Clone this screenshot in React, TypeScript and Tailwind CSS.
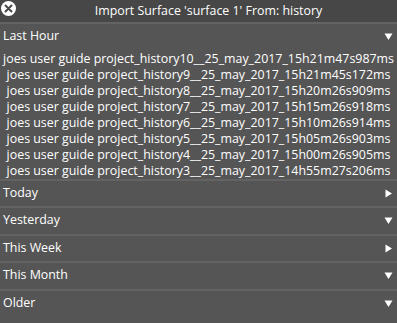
import React from 'react';

type Section = { label: string; open: boolean };

const files = [
  'joes user guide project_history10__25_may_2017_15h21m47s987ms',
  'joes user guide project_history9__25_may_2017_15h21m45s172ms',
  'joes user guide project_history8__25_may_2017_15h20m26s909ms',
  'joes user guide project_history7__25_may_2017_15h15m26s918ms',
  'joes user guide project_history6__25_may_2017_15h10m26s914ms',
  'joes user guide project_history5__25_may_2017_15h05m26s903ms',
  'joes user guide project_history4__25_may_2017_15h00m26s905ms',
  'joes user guide project_history3__25_may_2017_14h55m27s206ms',
];

const sections: Section[] = [
  { label: 'Today', open: false },
  { label: 'Yesterday', open: true },
  { label: 'This Week', open: false },
  { label: 'This Month', open: true },
  { label: 'Older', open: true },
];

const Arrow: React.FC<{ open: boolean }> = ({ open }) => (
  <svg width="9" height="9" viewBox="0 0 9 9" className="shrink-0">
    {open ? <polygon points="0.5,1.5 8.5,1.5 4.5,8" fill="#fff" /> : <polygon points="1.5,0.5 1.5,8.5 8,4.5" fill="#fff" />}
  </svg>
);

const Header: React.FC<Section> = ({ label, open }) => (
  <div className="border-t-2 border-[#636363]">
    <div className="h-[25.5px] flex items-center justify-between pl-[3px] pr-[4px] bg-[#555555]">
      <span>{label}</span>
      <Arrow open={open} />
    </div>
  </div>
);

export default function App() {
  return (
    <div className="w-[397px] h-[323px] overflow-hidden bg-[#555555] text-white text-[12.4px] font-['Open_Sans',sans-serif] relative">
      <div className="h-[22px] bg-[#474747] flex items-center relative">
        <div className="absolute left-[1px] top-[1px] w-[15px] h-[15px] rounded-full bg-white flex items-center justify-center">
          <svg width="9" height="9" viewBox="0 0 9 9">
            <path d="M1.5 1.5 L7.5 7.5 M7.5 1.5 L1.5 7.5" stroke="#474747" strokeWidth="2" strokeLinecap="round" />
          </svg>
        </div>
        <div className="flex-1 text-center pl-[20px]">Import Surface 'surface 1' From: history</div>
      </div>
      <Header label="Last Hour" open={true} />
      <div className="pt-[1px] pb-[0px]">
        {files.map(f => (
          <div key={f} className="h-[16px] leading-[16px] text-center whitespace-nowrap">{f}</div>
        ))}
      </div>
      {sections.map(s => (
        <Header key={s.label} {...s} />
      ))}
    </div>
  );
}
